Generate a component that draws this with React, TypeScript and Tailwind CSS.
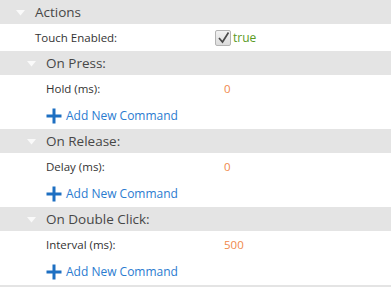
import React from "react";

const Tri = ({ left }: { left: string }) => (
  <svg width="9" height="6" viewBox="0 0 9 6" className={left}>
    <path d="M0 0 L9 0 L4.5 5.5 Z" fill="#fafafa" />
  </svg>
);

const Header = ({ title, sub }: { title: string; sub?: boolean }) => (
  <div className="h-[24px] bg-[#e4e4e4] flex items-center">
    <Tri left={sub ? "ml-[27px] mt-[2px]" : "ml-[16px] mt-[2px]"} />
    <span className="text-[13.5px] text-[#474747] ml-[10px]">{title}</span>
  </div>
);

const Prop = ({
  label,
  value,
  indent,
}: {
  label: string;
  value: React.ReactNode;
  indent?: boolean;
}) => (
  <div className="h-[27px] bg-white flex items-center">
    <span
      className={
        "text-[11.5px] text-[#333] " + (indent ? "w-[224px] pl-[46px]" : "w-[215px] pl-[35px]")
      }
    >
      {label}
    </span>
    {value}
  </div>
);

const AddCmd = () => (
  <div className="h-[27px] bg-white flex items-center pl-[46px]">
    <svg width="16" height="16" viewBox="0 0 16 16">
      <rect x="6.5" y="0.5" width="3" height="15" fill="#1d6fc2" />
      <rect x="0.5" y="6.5" width="15" height="3" fill="#1d6fc2" />
    </svg>
    <span className="ml-[4px] text-[12px] text-[#2b7bd0]">Add New Command</span>
  </div>
);

export default function App() {
  return (
    <div
      className="w-[391px] h-[287px] bg-white overflow-hidden"
      style={{ fontFamily: '"Open Sans", "Noto Sans", sans-serif' }}
    >
      <Header title="Actions" />
      <Prop
        label="Touch Enabled:"
        value={
          <span className="flex items-center">
            <span className="w-[16px] h-[16px] border border-[#b4b4b4] rounded-[2px] bg-gradient-to-b from-[#f2f2f2] to-[#dcdcdc] flex items-center justify-center">
              <svg width="13" height="13" viewBox="0 0 13 13">
                <path d="M2 7 L5.5 11 L11.5 1.5" stroke="#4a4a4a" strokeWidth="1.7" fill="none" />
              </svg>
            </span>
            <span className="ml-[2px] text-[12px] text-[#5a9a1e]">true</span>
          </span>
        }
      />
      <Header title="On Press:" sub />
      <Prop indent label="Hold (ms):" value={<span className="text-[11.5px] text-[#f0884a]">0</span>} />
      <AddCmd />
      <Header title="On Release:" sub />
      <Prop indent label="Delay (ms):" value={<span className="text-[11.5px] text-[#f0884a]">0</span>} />
      <AddCmd />
      <Header title="On Double Click:" sub />
      <Prop indent label="Interval (ms):" value={<span className="text-[11.5px] text-[#f0884a]">500</span>} />
      <AddCmd />
      <div className="h-[2px] bg-[#e4e4e4]" />
    </div>
  );
}
